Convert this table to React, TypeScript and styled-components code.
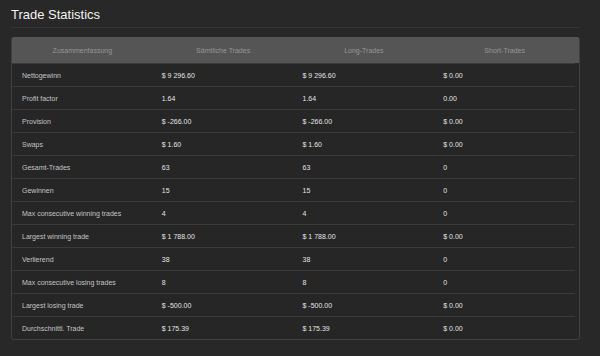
import React from 'react';
import styled, { createGlobalStyle } from 'styled-components';

const GlobalStyle = createGlobalStyle`
  html, body {
    margin: 0;
    padding: 0;
    background: #282828;
  }
  body {
    font-family: 'Liberation Sans', Arial, sans-serif;
  }
`;

const Page = styled.div`
  padding: 0 20px 0 11px;
  width: 600px;
  height: 356px;
  box-sizing: border-box;
  overflow: hidden;
`;

const Title = styled.h2`
  margin: 0;
  padding: 6px 0 4px;
  font-size: 13px;
  line-height: 17px;
  font-weight: normal;
  color: #f2f2f2;
  border-bottom: 1px solid #353535;
`;

const Card = styled.div`
  margin-top: 9px;
  border: 1px solid #404040;
  border-top: none;
  border-radius: 3px;
  background: linear-gradient(#555555 0 26px, #262626 26px);
  overflow: hidden;
`;

const Table = styled.table`
  width: calc(100% - 4px);
  table-layout: fixed;
  border-collapse: collapse;
  font-size: 7px;
`;

const HeadCell = styled.th`
  height: 26px;
  padding: 0;
  font-weight: normal;
  text-align: center;
  color: #959595;
  border-bottom: 1px solid #3a3a3a;
`;

const Row = styled.tr`
  & + & > td {
    border-top: 1px solid #3a3a3a;
  }
`;

const Cell = styled.td<{ $label?: boolean }>`
  height: 22px;
  padding: 0 0 0 ${({ $label }) => ($label ? '10px' : '9px')};
  color: ${({ $label }) => ($label ? '#c4c4c4' : '#e4e4e4')};
  white-space: nowrap;
`;

const columns = ['Zusammenfassung', 'Sämtliche Trades', 'Long-Trades', 'Short-Trades'];

const rows: [string, string, string, string][] = [
  ['Nettogewinn', '$ 9 296.60', '$ 9 296.60', '$ 0.00'],
  ['Profit factor', '1.64', '1.64', '0.00'],
  ['Provision', '$ -266.00', '$ -266.00', '$ 0.00'],
  ['Swaps', '$ 1.60', '$ 1.60', '$ 0.00'],
  ['Gesamt-Trades', '63', '63', '0'],
  ['Gewinnen', '15', '15', '0'],
  ['Max consecutive winning trades', '4', '4', '0'],
  ['Largest winning trade', '$ 1 788.00', '$ 1 788.00', '$ 0.00'],
  ['Verlierend', '38', '38', '0'],
  ['Max consecutive losing trades', '8', '8', '0'],
  ['Largest losing trade', '$ -500.00', '$ -500.00', '$ 0.00'],
  ['Durchschnittl. Trade', '$ 175.39', '$ 175.39', '$ 0.00'],
];

export default function App() {
  return (
    <>
      <GlobalStyle />
      <Page>
        <Title>Trade Statistics</Title>
        <Card>
          <Table>
            <thead>
              <tr>
                {columns.map((c) => (
                  <HeadCell key={c}>{c}</HeadCell>
                ))}
              </tr>
            </thead>
            <tbody>
              {rows.map((r) => (
                <Row key={r[0]}>
                  <Cell $label>{r[0]}</Cell>
                  <Cell>{r[1]}</Cell>
                  <Cell>{r[2]}</Cell>
                  <Cell>{r[3]}</Cell>
                </Row>
              ))}
            </tbody>
          </Table>
        </Card>
      </Page>
    </>
  );
}
